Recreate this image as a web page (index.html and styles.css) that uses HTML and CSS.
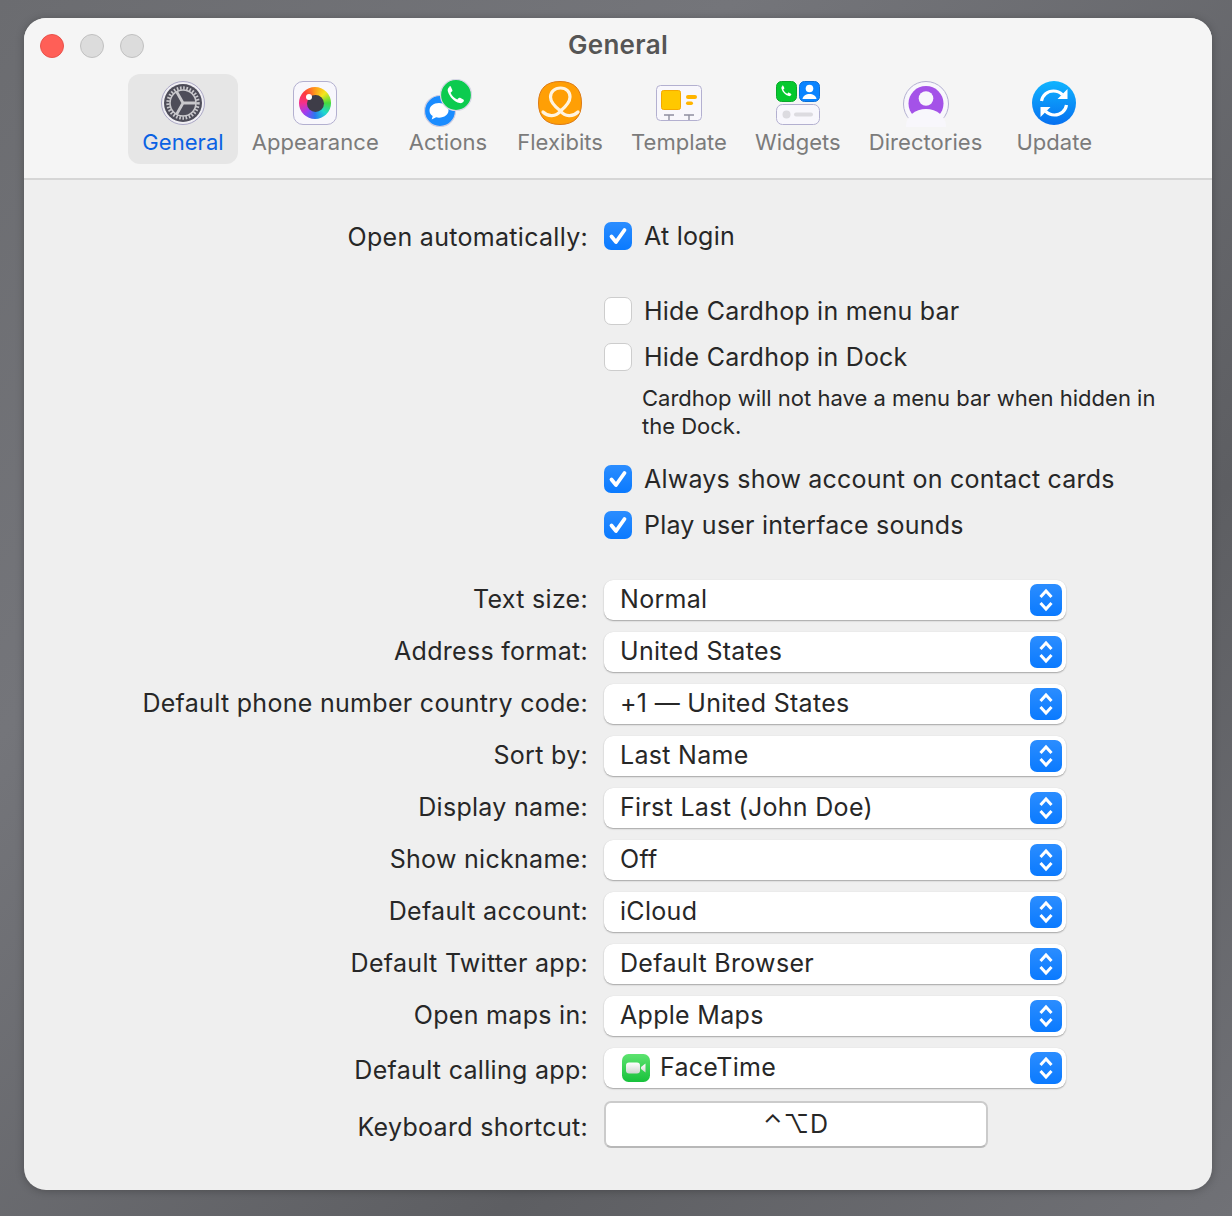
FILE: index.html
```html
<!DOCTYPE html>
<html lang="en">
<head>
<meta charset="utf-8">
<title>General</title>
<link rel="stylesheet" href="styles.css">
</head>
<body>
<div class="window">
  <header class="head">
    <div class="lights"><span class="light red"></span><span class="light"></span><span class="light"></span></div>
    <div class="title">General</div>
    <nav class="tabs">
      <div class="tab active">
        <svg class="icon" viewBox="0 0 44 44">
          <circle cx="22" cy="22" r="21.500" fill="#f0eff4" stroke="#a9a6c4"/>
          <circle cx="22" cy="22" r="19" fill="#4e4d59"/>
          <circle cx="22" cy="22" r="15" fill="none" stroke="#c9c8cc" stroke-width="3.400" stroke-dasharray="1.600 1.600"/>
          <circle cx="22" cy="22" r="13" fill="none" stroke="#c9c8cc" stroke-width="1.600"/>
          <path d="M22 22 15.500 10.500M22 22h13M22 22 15.500 33.500" stroke="#c9c8cc" stroke-width="2.800" fill="none"/>
        </svg>
        <span class="tab-label">General</span>
      </div>
      <div class="tab tab-app">
        <div class="app-tile"><div class="eye"><div class="pupil"><div class="glint"></div></div></div></div>
        <span class="tab-label">Appearance</span>
      </div>
      <div class="tab tab-actions">
        <svg class="icon icon-actions" viewBox="0 0 48 48">
          <circle cx="16" cy="32" r="15.500" fill="#1a8cff" stroke="#cfcee2" stroke-width="1.200"/>
          <path d="M15 24c-5.500 0-9.500 3.300-9.500 7.500 0 2.300 1.200 4.300 3.200 5.600l-1 3.400 4.400-2.200c1 .3 1.900.4 2.900.4 5.500 0 9.500-3.300 9.500-7.200S20.500 24 15 24z" fill="#fff"/>
          <circle cx="32" cy="16" r="15.500" fill="#0ccb4f" stroke="#d8d7e6" stroke-width="1.200"/>
          <path d="M25.500 8c-1.600 1-2.200 2.700-1.600 4.400 1.700 5.400 6 10 11.800 11.700 1.700.5 3.300-.5 4.100-2.100.3-.7 0-1.300-.5-1.600l-3.200-1.600c-.7-.3-1.300-.1-1.700.4l-1.100 1.300c-3.200-1.400-5.400-3.700-6.700-6.800l1.300-1.100c.5-.4.7-1.100.4-1.700l-1.400-3.200c-.3-.7-.9-.8-1.400-.5z" fill="#fff"/>
        </svg>
        <span class="tab-label">Actions</span>
      </div>
      <div class="tab tab-end-tight">
        <svg class="icon" viewBox="0 0 44 44">
          <path d="M22 .5C36 .5 43.500 8 43.500 22S36 43.500 22 43.500.5 36 .5 22 8 .5 22 .5z" fill="#ff9f05" stroke="#dc7a14"/>
          <path d="M5 31c5 5 13 5 17.500-1 4.500 6 12.500 6 17.500 1M22.500 30c-6.500-5-10-10-10-14 0-5 4-9 10-9s9.500 4 9.500 9c0 4-3.500 9-9.500 14z" fill="none" stroke="#fff4e0" stroke-width="3.200" stroke-linecap="round"/>
        </svg>
        <span class="tab-label">Flexibits</span>
      </div>
      <div class="tab tab-tight">
        <svg class="icon icon-wide" viewBox="0 0 46 44">
          <rect x=".5" y="4.500" width="45" height="35" rx="4" fill="#f8f7fc" stroke="#b3b0d0"/>
          <rect x="5.500" y="9.500" width="19" height="19" rx="2" fill="#ffc800" stroke="#f5a800"/>
          <rect x="30" y="14" width="11" height="4" rx="2" fill="#ffb400"/>
          <rect x="30" y="20.500" width="7" height="3.500" rx="1.700" fill="#ffb400"/>
          <path d="M8 34h10M13 34v5M28 34h10M33 34v5" stroke="#8f8fa0" stroke-width="1.400" fill="none"/>
        </svg>
        <span class="tab-label">Template</span>
      </div>
      <div class="tab tab-tight">
        <svg class="icon" viewBox="0 0 44 44">
          <rect x=".5" y=".5" width="20" height="20" rx="5" fill="#05c92e" stroke="#0aa82b"/>
          <path d="M6.500 5c-1 .6-1.300 1.600-1 2.700 1 3.400 3.700 6.400 7.300 7.400 1 .3 2-.4 2.500-1.400.2-.4 0-.8-.3-1l-2-1c-.4-.2-.8-.1-1 .3l-.7.8c-2-.9-3.300-2.300-4.100-4.200l.8-.7c.3-.3.400-.7.300-1l-.9-2c-.2-.4-.7-.6-.9-.9z" fill="#fff"/>
          <rect x="23.500" y=".5" width="20" height="20" rx="5" fill="#0a84ff" stroke="#0c6fd6"/>
          <circle cx="33.500" cy="7.500" r="3.800" fill="#fff"/>
          <path d="M26.500 18c.6-3.500 3.500-5 7-5s6.400 1.500 7 5z" fill="#fff"/>
          <rect x=".5" y="23.500" width="43" height="20" rx="6" fill="#f8f7fc" stroke="#b3b0d0"/>
          <circle cx="10.500" cy="33.500" r="4" fill="#dcdbe0"/>
          <rect x="18" y="31.500" width="19" height="4" rx="2" fill="#dcdbe0"/>
        </svg>
        <span class="tab-label">Widgets</span>
      </div>
      <div class="tab tab-dir">
        <svg class="icon icon-wide icon-tall" viewBox="0 0 46 46">
          <circle cx="23" cy="23" r="22.500" fill="#f8f7fc" stroke="#b3b0d0"/>
          <circle cx="23" cy="22.500" r="17.500" fill="#a452e8"/>
          <ellipse cx="23" cy="45" rx="20" ry="17" fill="#f8f7fc"/>
          <circle cx="23" cy="17.500" r="7.300" fill="#f8f7fc"/>
        </svg>
        <span class="tab-label">Directories</span>
      </div>
      <div class="tab tab-update">
        <svg class="icon" viewBox="0 0 44 44">
          <defs><linearGradient id="upd" x1="0" y1="0" x2="0" y2="1"><stop offset="0" stop-color="#10b4ff"/><stop offset="1" stop-color="#0670f0"/></linearGradient></defs>
          <circle cx="22" cy="22" r="22" fill="url(#upd)"/>
          <path d="M9.500 20C10.500 14 15.500 10 21.500 10c3.500 0 6.500 1.300 8.800 3.600M34.500 24C33.500 30 28.500 34 22.500 34c-3.500 0-6.500-1.300-8.800-3.600" fill="none" stroke="#fff" stroke-width="3.200"/>
          <path d="M35.500 8v10h-10zM8.500 36V26h10z" fill="#fff"/>
        </svg>
        <span class="tab-label">Update</span>
      </div>
    </nav>
  </header>

  <main class="prefs">
    <section class="checks">
      <div class="lbl first-lbl">Open automatically:</div>
      <div class="check-row first-row"><span class="box on"><svg viewBox="0 0 28 28"><path d="M7.500 14.500l4.500 5.500 8.500-12" /></svg></span>At login</div>
      <div class="check-row"><span class="box"></span>Hide Cardhop in menu bar</div>
      <div class="check-row"><span class="box"></span>Hide Cardhop in Dock</div>
      <p class="note">Cardhop will not have a menu bar when hidden in the Dock.</p>
      <div class="check-row"><span class="box on"><svg viewBox="0 0 28 28"><path d="M7.500 14.500l4.500 5.500 8.500-12" /></svg></span>Always show account on contact cards</div>
      <div class="check-row"><span class="box on"><svg viewBox="0 0 28 28"><path d="M7.500 14.500l4.500 5.500 8.500-12" /></svg></span>Play user interface sounds</div>
    </section>

    <section class="selects">
      <div class="lbl">Text size:</div><div class="select">Normal<span class="step"><svg viewBox="0 0 32 32"><path d="M10.500 13 16 7l5.500 6M10.500 19l5.500 6 5.500-6"/></svg></span></div>
      <div class="lbl">Address format:</div><div class="select">United States<span class="step"><svg viewBox="0 0 32 32"><path d="M10.500 13 16 7l5.500 6M10.500 19l5.500 6 5.500-6"/></svg></span></div>
      <div class="lbl">Default phone number country code:</div><div class="select">+1 — United States<span class="step"><svg viewBox="0 0 32 32"><path d="M10.500 13 16 7l5.500 6M10.500 19l5.500 6 5.500-6"/></svg></span></div>
      <div class="lbl">Sort by:</div><div class="select">Last Name<span class="step"><svg viewBox="0 0 32 32"><path d="M10.500 13 16 7l5.500 6M10.500 19l5.500 6 5.500-6"/></svg></span></div>
      <div class="lbl">Display name:</div><div class="select">First Last (John Doe)<span class="step"><svg viewBox="0 0 32 32"><path d="M10.500 13 16 7l5.500 6M10.500 19l5.500 6 5.500-6"/></svg></span></div>
      <div class="lbl">Show nickname:</div><div class="select">Off<span class="step"><svg viewBox="0 0 32 32"><path d="M10.500 13 16 7l5.500 6M10.500 19l5.500 6 5.500-6"/></svg></span></div>
      <div class="lbl">Default account:</div><div class="select">iCloud<span class="step"><svg viewBox="0 0 32 32"><path d="M10.500 13 16 7l5.500 6M10.500 19l5.500 6 5.500-6"/></svg></span></div>
      <div class="lbl">Default Twitter app:</div><div class="select">Default Browser<span class="step"><svg viewBox="0 0 32 32"><path d="M10.500 13 16 7l5.500 6M10.500 19l5.500 6 5.500-6"/></svg></span></div>
      <div class="lbl">Open maps in:</div><div class="select">Apple Maps<span class="step"><svg viewBox="0 0 32 32"><path d="M10.500 13 16 7l5.500 6M10.500 19l5.500 6 5.500-6"/></svg></span></div>
      <div class="lbl calling-lbl">Default calling app:</div><div class="select">
        <svg class="ft" viewBox="0 0 28 28">
          <defs><linearGradient id="ftg" x1="0" y1="0" x2="0" y2="1"><stop offset="0" stop-color="#5de36f"/><stop offset="1" stop-color="#17c13b"/></linearGradient>
          <linearGradient id="ftw" x1="0" y1="0" x2="0" y2="1"><stop offset="0" stop-color="#fff"/><stop offset="1" stop-color="#cfd6d0"/></linearGradient></defs>
          <rect width="28" height="28" rx="6.500" fill="url(#ftg)"/>
          <rect x="4" y="8.500" width="14" height="11" rx="3" fill="url(#ftw)"/>
          <path d="M19 13l4.500-3.500v9L19 15z" fill="url(#ftw)"/>
        </svg>FaceTime<span class="step"><svg viewBox="0 0 32 32"><path d="M10.500 13 16 7l5.500 6M10.500 19l5.500 6 5.500-6"/></svg></span></div>
      <div class="lbl shortcut-lbl">Keyboard shortcut:</div><div class="shortcut">⌃⌥D</div>
    </section>
  </main>
</div>
</body>
</html>
```
FILE: styles.css
```css
* { box-sizing: border-box; }
html, body { height: 100%; }
body {
  margin: 0;
  padding: 18px 20px 26px 24px;
  background: linear-gradient(135deg, #6b6c70 0%, #74757a 30%, #5d5e62 70%, #707176 100%);
  font-family: Inter, "Noto Sans", sans-serif;
  color: #272727;
  overflow: hidden;
}
.window {
  height: 1172px;
  border-radius: 22px;
  background: #efefef;
  overflow: hidden;
  box-shadow: 0 1px 8px rgba(0,0,0,.25);
  display: flex;
  flex-direction: column;
}
.head {
  height: 162px;
  flex: none;
  background: #f5f5f5;
  border-bottom: 2px solid #d6d6d6;
  position: relative;
  padding-top: 56px;
}
.lights {
  position: absolute;
  left: 16px;
  top: 16px;
  display: flex;
  gap: 16px;
}
.light {
  width: 24px;
  height: 24px;
  border-radius: 50%;
  background: #dcdcdc;
  border: 1px solid #c0c0c0;
}
.light.red { background: #ff5f57; border-color: #e8524b; }
.title {
  position: absolute;
  left: 0;
  right: 0;
  top: 12px;
  text-align: center;
  font-size: 26px;
  letter-spacing: .3px;
  line-height: 30px;
  font-weight: 600;
  color: #555;
}
.tabs {
  display: flex;
  justify-content: center;
  padding-right: 1.500px;
}
.tab {
  height: 90px;
  padding: 6px 14.500px 0;
  border-radius: 12px;
  display: flex;
  flex-direction: column;
  align-items: center;
  gap: 1px;
  color: #7b7b7b;
}
.tab-app { padding-left: 13.500px; padding-right: 15.500px; }
.tab-actions { padding-right: 15.500px; }
.tab-tight { padding-left: 14px; padding-right: 14px; }
.tab-end-tight { padding-right: 14px; }
.tab-dir { padding-left: 14px; padding-right: 18px; }
.tab-update { padding-left: 16px; }
.tab.active { background: #e6e6e6; color: #0a62e3; }
.tab-label { font-size: 22px; letter-spacing: .05px; line-height: 30px; white-space: nowrap; }
.icon { width: 44px; height: 44px; margin: 1px 0; display: block; flex: none; }
.icon-wide { width: 46px; }
.icon-tall { height: 46px; margin: 1px 0 -1px; }
.icon-actions { width: 48px; height: 48px; margin: -1px 0; }
.app-tile {
  width: 44px;
  height: 44px;
  margin: 1px 0;
  flex: none;
  border-radius: 10px;
  background: #f8f7fc;
  border: 1px solid #b3b0d0;
  display: flex;
  align-items: center;
  justify-content: center;
}
.eye {
  width: 32px;
  height: 32px;
  border-radius: 50%;
  background: conic-gradient(#ff9c1a, #f6e51e, #46dc3c, #1fd8d0, #2a78f0, #a03cf0, #f5308c, #ff3a3a, #ff9c1a);
  display: flex;
  align-items: center;
  justify-content: center;
}
.pupil {
  width: 17px;
  height: 17px;
  border-radius: 50%;
  background: #3e3d48;
  position: relative;
}
.glint {
  position: absolute;
  left: -1px;
  top: -1px;
  width: 6px;
  height: 6px;
  border-radius: 50%;
  background: #fff;
}
.prefs {
  padding-top: 37px;
  display: flex;
  flex-direction: column;
}
.lbl {
  height: 40px;
  font-size: 25px;
  letter-spacing: .3px;
  line-height: 38px;
  text-align: right;
  white-space: nowrap;
}
.checks {
  display: flex;
  flex-direction: column;
  padding-left: 580px;
  position: relative;
}
.first-lbl {
  position: absolute;
  left: 0;
  width: 564px;
  top: 0;
  line-height: 40px;
}
.check-row {
  height: 46px;
  display: flex;
  align-items: center;
  gap: 12px;
  font-size: 25px;
  letter-spacing: .22px;
  white-space: nowrap;
}
.first-row { height: 38px; margin-bottom: 33px; }
.box {
  width: 28px;
  height: 28px;
  flex: none;
  border-radius: 7px;
  background: #fff;
  border: 1px solid #cdcdcd;
}
.box.on {
  background: linear-gradient(#2b8dff, #0a7aff);
  border: 0;
}
.box svg { display: block; width: 28px; height: 28px; }
.box path { fill: none; stroke: #fff; stroke-width: 3.800; stroke-linecap: round; stroke-linejoin: round; }
.note {
  margin: 4px 0 16px 38px;
  font-size: 22px;
  line-height: 28px;
  width: 530px;
}
.selects {
  margin-top: 32px;
  display: grid;
  grid-template-columns: 564px 462px;
  column-gap: 16px;
  row-gap: 12px;
  align-items: center;
}
.select {
  height: 40px;
  padding: 0 0 2px 16px;
  border-radius: 9px;
  background: #fff;
  box-shadow: 0 1px 1.500px rgba(0,0,0,.3), 0 0 1px rgba(0,0,0,.1);
  display: flex;
  align-items: center;
  position: relative;
  font-size: 25px;
  letter-spacing: .3px;
  white-space: nowrap;
}
.step {
  position: absolute;
  right: 4px;
  top: 4px;
  width: 32px;
  height: 32px;
  border-radius: 7px;
  background: linear-gradient(#2b8dff, #0a7aff);
}
.step svg { display: block; width: 32px; height: 32px; }
.step path { fill: none; stroke: #fff; stroke-width: 3; }
.ft { width: 28px; height: 28px; margin: 2px 10px 0 2px; flex: none; }
.calling-lbl { margin-top: 3px; margin-bottom: -3px; }
.shortcut-lbl { margin-top: 8px; }
.shortcut {
  width: 384px;
  height: 47px;
  margin-top: 1px;
  padding-bottom: 2px;
  background: #fff;
  border: 2px solid #cbcbcb;
  border-bottom-color: #b8b8b8;
  border-radius: 7px;
  display: flex;
  align-items: center;
  justify-content: center;
  font-size: 25px;
  letter-spacing: 1px;
  font-family: Inter, "DejaVu Sans", sans-serif;
}
```
